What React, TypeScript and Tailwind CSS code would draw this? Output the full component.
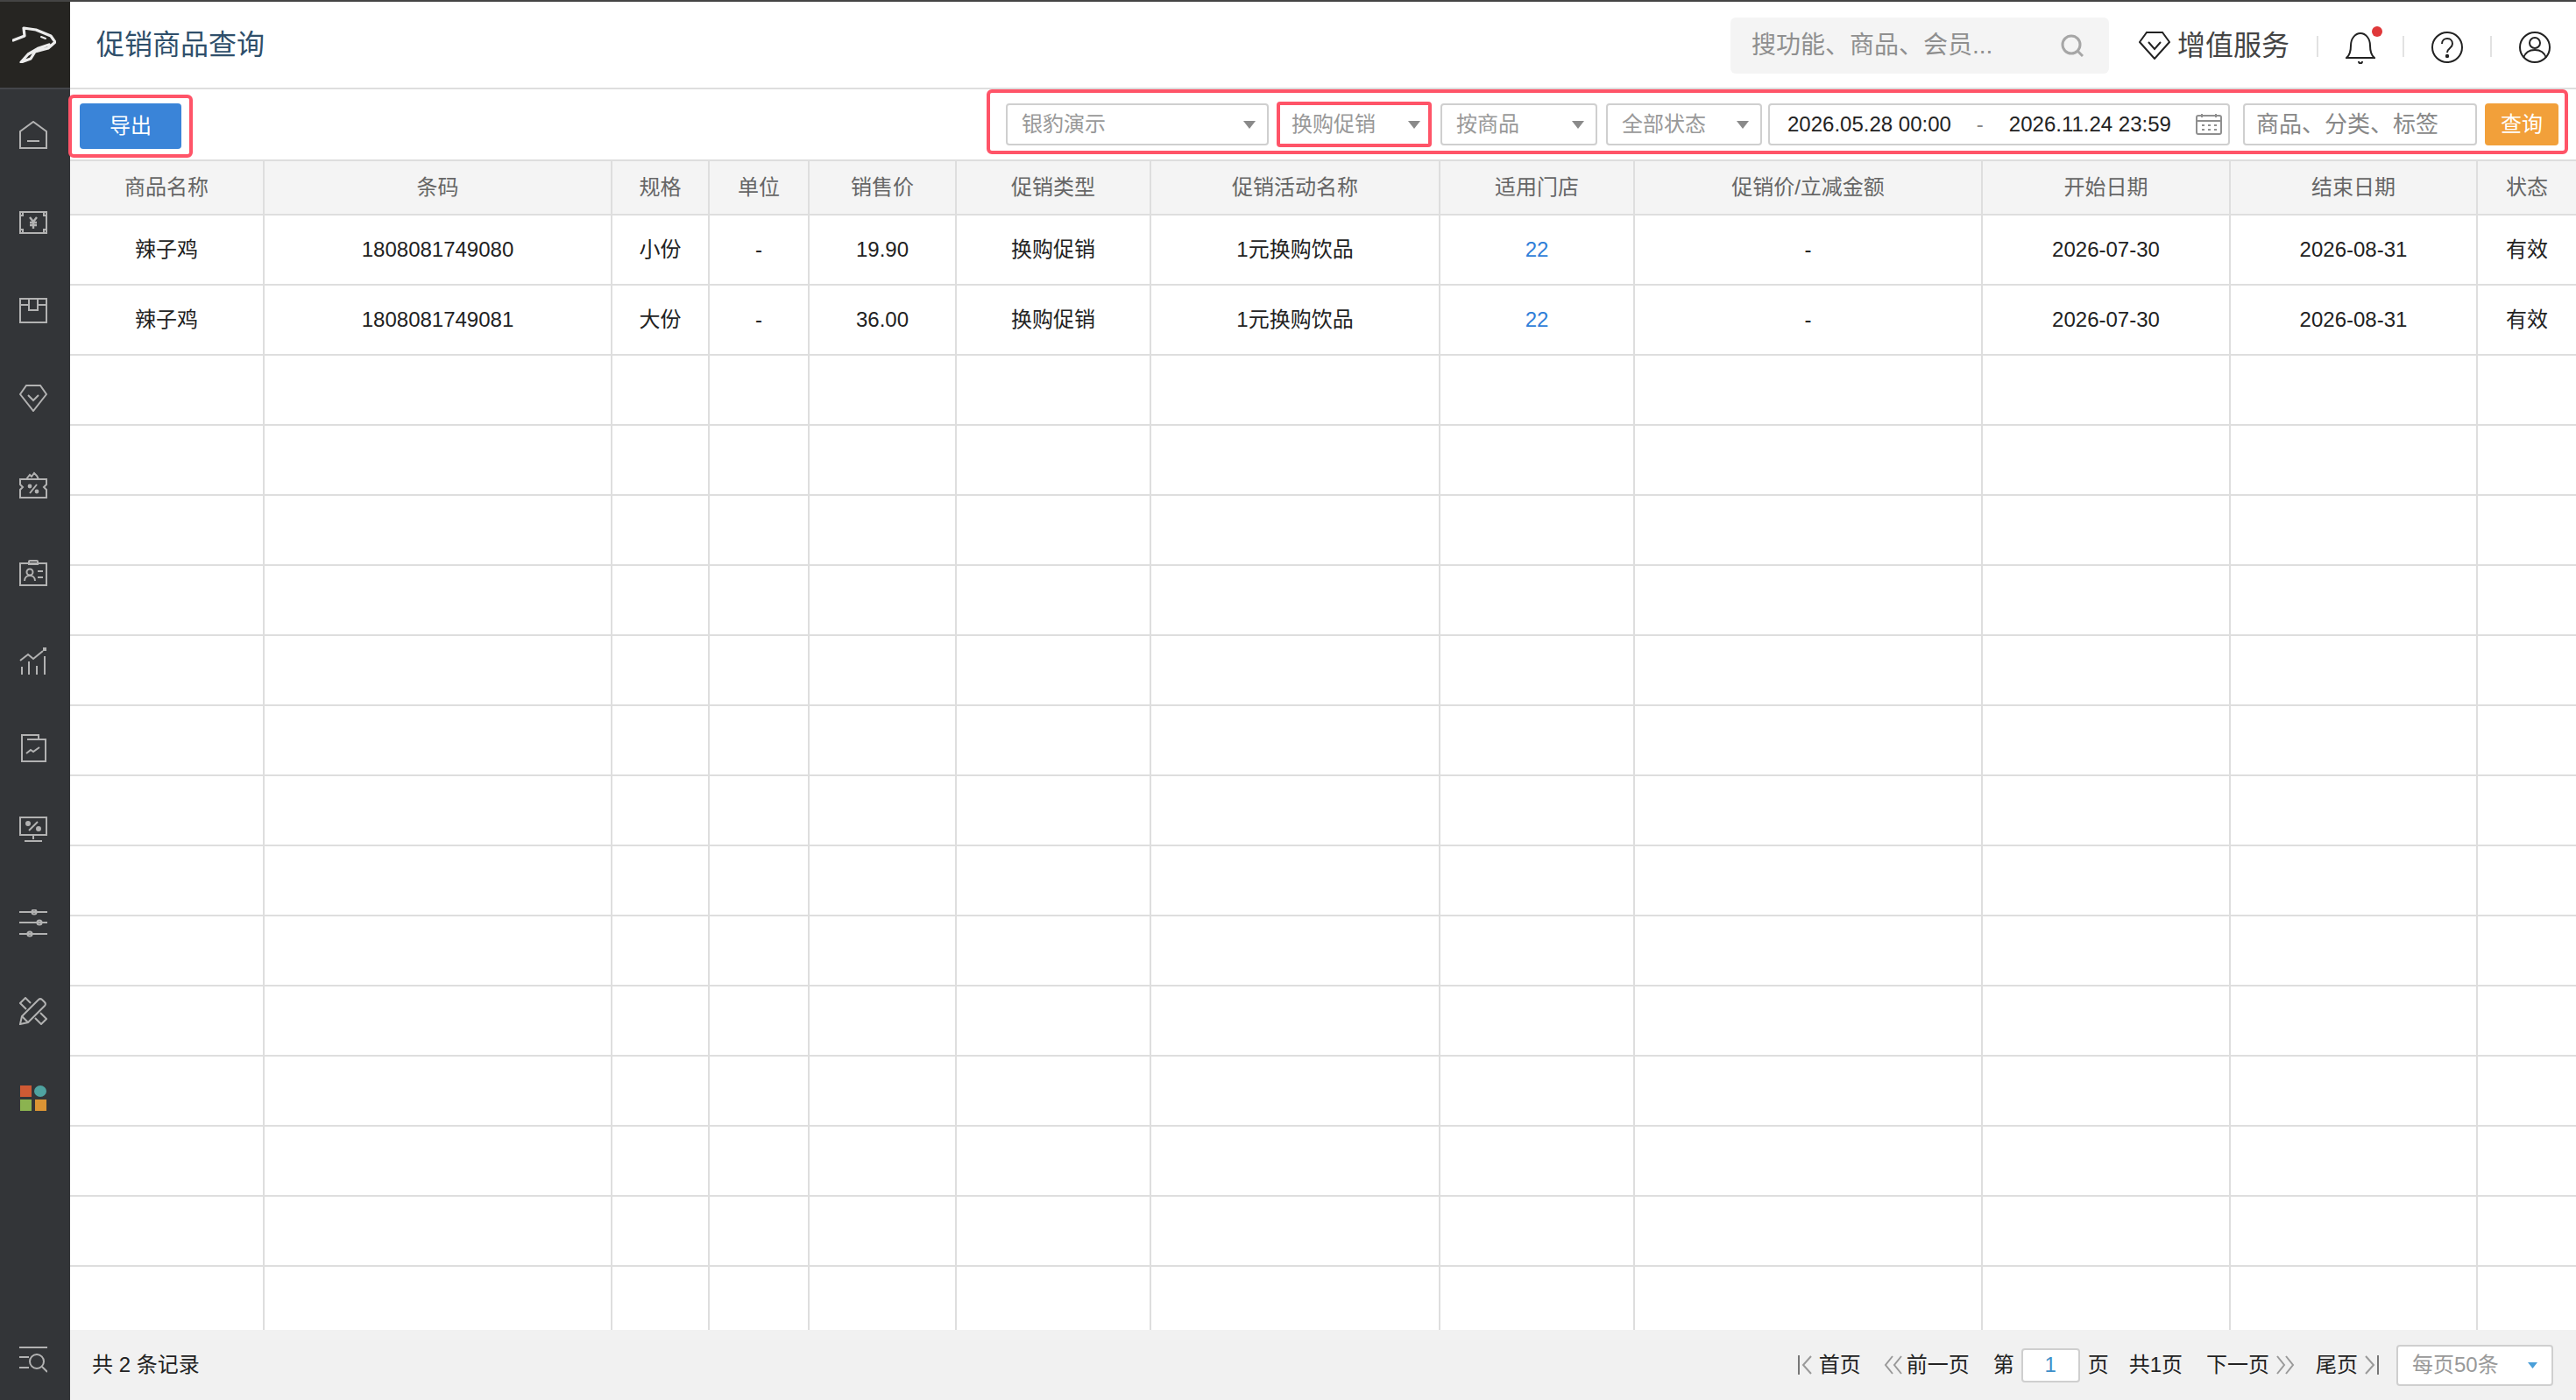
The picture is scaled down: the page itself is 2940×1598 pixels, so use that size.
import React from "react";

const columns = [
  { title: "商品名称", width: "w-[221px]" },
  { title: "条码", width: "w-[397px]" },
  { title: "规格", width: "w-[111px]" },
  { title: "单位", width: "w-[114px]" },
  { title: "销售价", width: "w-[168px]" },
  { title: "促销类型", width: "w-[222px]" },
  { title: "促销活动名称", width: "w-[330px]" },
  { title: "适用门店", width: "w-[222px]" },
  { title: "促销价/立减金额", width: "w-[397px]" },
  { title: "开始日期", width: "w-[283px]" },
  { title: "结束日期", width: "w-[282px]" },
  { title: "状态", width: "w-[113px]" },
];

const rows = [
  ["辣子鸡", "1808081749080", "小份", "-", "19.90", "换购促销", "1元换购饮品", "22", "-", "2026-07-30", "2026-08-31", "有效"],
  ["辣子鸡", "1808081749081", "大份", "-", "36.00", "换购促销", "1元换购饮品", "22", "-", "2026-07-30", "2026-08-31", "有效"],
];

const Icon = ({ children, w = 32, h = 32, className = "" }: { children: React.ReactNode; w?: number; h?: number; className?: string }) => (
  <svg width={w} height={h} viewBox={`0 0 ${w} ${h}`} fill="none" stroke="currentColor" strokeWidth="2" className={className}>
    {children}
  </svg>
);

const navIcons = [
  <Icon key="home">
    <path d="M1 31V12L16 1l15 11v19z" />
    <path d="M9 23h14" />
  </Icon>,
  <Icon key="money" h={26}>
    <path d="M1 1h30v24H1z" />
    <path d="M1 5h3V1M31 5h-3V1M1 21h3v4M31 21h-3v4" />
    <path d="M12 7l4 5 4-5M16 12v8M12 13h8M12 16h8" strokeWidth="2.4" />
  </Icon>,
  <Icon key="box" h={29}>
    <path d="M1 1h30v27H1z" />
    <path d="M1 8h10V1M31 8H21V1M11 8v6h10V8" />
  </Icon>,
  <Icon key="diamond" h={31}>
    <path d="M8 1h16l7 10-15 19L1 11z" />
    <path d="M10 12l6 6 6-6" />
  </Icon>,
  <Icon key="coupon">
    <path d="M1 9h30v6l-3 3 3 3v9H1v-9l3-3-3-3z" />
    <path d="M8 9l4-5 2 2 3-4 3 3 2 4" />
    <path d="M12 25l8-10" />
    <circle cx="12" cy="17" r="1.4" fill="currentColor" />
    <circle cx="20" cy="23" r="1.4" fill="currentColor" />
  </Icon>,
  <Icon key="card" h={30}>
    <path d="M1 4h30v25H1z" />
    <path d="M11 4V2a1 1 0 0 1 1-1h8a1 1 0 0 1 1 1v3h-10z" />
    <circle cx="12" cy="14" r="3.5" />
    <path d="M6 24c0-4 3-6 6-6s6 2 6 6M21 13h6M21 20h6" />
  </Icon>,
  <Icon key="chart">
    <path d="M1 16l9-7 6 5 11-9" />
    <path d="M3 32v-9M11 32V17M20 32v-10M29 32V11" />
    <path d="M27 1h4v4h-4z" fill="currentColor" stroke="none" />
  </Icon>,
  <Icon key="report">
    <path d="M3 31V1h19v5h8v25z" />
    <path d="M9 6h13" />
    <path d="M8 22l5-4 3 2 7-5" />
  </Icon>,
  <Icon key="screen" h={30} className="mb-[14px]">
    <path d="M1 1h30v20H1z" />
    <path d="M16 21v5M6 28h20" />
    <path d="M11 16l10-10" />
    <circle cx="10" cy="8" r="2" fill="currentColor" />
    <circle cx="22" cy="14" r="2" fill="currentColor" />
  </Icon>,
  <Icon key="sliders">
    <path d="M0 3h32M0 15h32M0 28h32" />
    <circle cx="17" cy="3" r="2.6" />
    <circle cx="23" cy="15" r="2.6" />
    <circle cx="12" cy="28" r="2.6" />
  </Icon>,
  <Icon key="tools">
    <path d="M1 31l2-9L22 3a3 3 0 0 1 4 0l3 3a3 3 0 0 1 0 4L10 29z" />
    <path d="M3 22l7 7" />
    <path d="M13 7L7 1 1 7l7 7M18 24l7 7 6-6-7-7" />
  </Icon>,
  <svg key="apps" width="32" height="30" viewBox="0 0 32 30">
    <rect x="1" y="0" width="13" height="13" fill="#cf5a34" />
    <ellipse cx="24" cy="6.500" rx="7" ry="6.500" fill="#4fa3a0" />
    <rect x="1" y="16" width="13" height="13" fill="#8bb350" />
    <rect x="18" y="16" width="13" height="13" fill="#db9434" />
  </svg>,
];

const Caret = ({ className = "" }: { className?: string }) => (
  <svg width="14" height="9" viewBox="0 0 14 9" className={className}>
    <path d="M0 0h14L7 9z" fill="currentColor" />
  </svg>
);

const Select = ({ label, className }: { label: string; className: string }) => (
  <div className={`flex h-[48px] items-center justify-between rounded-[4px] border-2 border-[#cfcfcf] bg-white pl-[16px] pr-[13px] text-[24px] text-[#999] ${className}`}>
    <span>{label}</span>
    <Caret className="text-[#8a8a8a]" />
  </div>
);

const Separator = () => <div className="mx-[31px] mt-[2px] h-[24px] w-[2px] bg-[#e2e2e2]" />;

const Sidebar = () => (
  <aside className="flex w-[80px] shrink-0 flex-col bg-[#333538] text-[#b2b2b2]">
    <div className="flex h-[100px] items-center justify-center border-b-2 border-[#44464a] bg-[#262522] pr-[2px]">
      <svg width="50" height="42" viewBox="0 0 50 42" fill="none" stroke="#ececec" strokeWidth="3.2" strokeLinejoin="round" strokeLinecap="round">
        <path d="M1 16L14 11 13 2l14 2 17 7 5 7-8 7-15 4-5 8-11 4 8-9 12-7 12-4" />
        <path d="M33 12l5 2" strokeWidth="2" />
      </svg>
    </div>
    <nav className="flex flex-1 flex-col pr-[4px]">
      {navIcons.map((icon, i) => (
        <div key={i} className="flex h-[100px] items-center justify-center pt-[4px]">
          {icon}
        </div>
      ))}
    </nav>
    <div className="flex h-[62px] justify-center pr-[4px]">
      <Icon>
        <path d="M0 2h32M0 13h11M0 25h11" />
        <circle cx="20" cy="18" r="8" />
        <path d="M26 24l6 6" />
      </Icon>
    </div>
  </aside>
);

const Header = () => (
  <header className="flex h-[100px] shrink-0 items-center justify-between border-b-2 border-[#dedede] pl-[30px] pr-[29px] pt-[2px]">
    <h1 className="mt-[-2px] text-[32px] font-normal text-[#2f4f6b]">促销商品查询</h1>
    <div className="flex items-center text-[#222]">
      <div className="mr-[34px] flex h-[64px] w-[432px] items-center justify-between rounded-[6px] bg-[#f4f4f4] pl-[24px] pr-[29px] text-[28px] text-[#8f8f8f]">
        <span>搜功能、商品、会员...</span>
        <svg width="26" height="26" viewBox="0 0 26 26" fill="none" stroke="#a6a6a6" strokeWidth="3">
          <circle cx="12" cy="12" r="10" />
          <path d="M19 19l6 6" />
        </svg>
      </div>
      <Icon w={36} h={32}>
        <path d="M9 1h18l8 11-17 19L1 12z" />
        <path d="M11 12l7 8 7-8" />
      </Icon>
      <span className="ml-[8px] text-[32px] text-[#444]">增值服务</span>
      <Separator />
      <div className="relative mt-[6px]">
        <svg width="34" height="36" viewBox="0 0 34 36" fill="none" stroke="currentColor" strokeWidth="2" className="block">
          <path d="M1 29c4-3 5-7 5-14 0-8 5-14 11-14s11 6 11 14c0 7 1 11 5 14z" />
          <path d="M15 33c0 3 4 3 4 0" />
        </svg>
        <span className="absolute right-[-8px] top-[-7px] h-[12px] w-[12px] rounded-full bg-[#e0383a]" />
      </div>
      <Separator />
      <svg width="36" height="36" viewBox="0 0 36 36" fill="none" stroke="currentColor" strokeWidth="2" className="mt-[3px]">
        <circle cx="18" cy="18" r="17" />
        <path d="M12 14c0-4 3-6 6-6s6 2 6 6c0 5-6 5-6 10" />
        <circle cx="18" cy="28" r="1.2" fill="currentColor" />
      </svg>
      <Separator />
      <svg width="36" height="36" viewBox="0 0 36 36" fill="none" stroke="currentColor" strokeWidth="2" className="mt-[3px]">
        <circle cx="18" cy="18" r="17" />
        <circle cx="18" cy="13" r="6" />
        <path d="M5 30c2-6 7-9 13-9s11 3 13 9" />
      </svg>
    </div>
  </header>
);

const Toolbar = () => (
  <div className="flex h-[82px] shrink-0 items-start justify-between border-b-2 border-[#dedede]">
    <div className="relative z-10 ml-[-2px] mt-[6px] flex h-[72px] w-[142px] items-center justify-center rounded-[6px] border-4 border-[#ff5468]">
      <button className="h-[52px] w-[116px] rounded-[4px] bg-[#3a84d8] text-[24px] text-white">导出</button>
    </div>
    <div className="mr-[9px] flex h-[74px] items-start rounded-[6px] border-4 border-[#ff5468] pl-[18px] pr-[7px] pt-[12px]">
      <Select label="银豹演示" className="w-[300px]" />
      <Select label="换购促销" className="ml-[9px] mt-[-2px] !h-[52px] w-[177px] !border-4 !border-[#ff5468] !pl-[13px] !pr-[9px]" />
      <Select label="按商品" className="ml-[10px] w-[179px]" />
      <Select label="全部状态" className="ml-[10px] w-[178px]" />
      <div className="ml-[7px] flex h-[48px] w-[527px] items-center rounded-[4px] border-2 border-[#cfcfcf] pl-[20px] text-[24px] text-[#222]">
        <span>2026.05.28 00:00</span>
        <span className="w-[66px] text-center text-[#888]">-</span>
        <span>2026.11.24 23:59</span>
        <svg width="30" height="24" viewBox="0 0 30 24" fill="none" stroke="#8f8f8f" strokeWidth="2" className="ml-[28px]">
          <rect x="1" y="2" width="28" height="21" rx="2" />
          <path d="M1 8h28M7 0v4M23 0v4" />
          <path d="M7 13h3M14 13h3M21 13h3M7 18h3M14 18h3M21 18h3" />
        </svg>
      </div>
      <div className="ml-[15px] flex h-[48px] w-[267px] items-center rounded-[4px] border-2 border-[#cfcfcf] pl-[13px] text-[26px] text-[#888]">
        商品、分类、标签
      </div>
      <button className="ml-[9px] h-[48px] w-[84px] rounded-[4px] bg-[#f2a03a] text-[24px] text-white">查询</button>
    </div>
  </div>
);

const ProductTable = () => (
  <div className="min-h-0 flex-1 overflow-hidden">
    <table className="w-[2860px] table-fixed border-collapse text-center text-[24px]">
      <colgroup>
        {columns.map((col) => (
          <col key={col.title} className={col.width} />
        ))}
      </colgroup>
      <thead>
        <tr className="h-[61px] bg-[#f4f4f4]">
          {columns.map((col, i) => (
            <th key={col.title} className={`border-b-2 border-[#dedede] font-normal text-[#666] ${i < columns.length - 1 ? "border-r-2" : ""}`}>
              {col.title}
            </th>
          ))}
        </tr>
      </thead>
      <tbody>
        {Array.from({ length: 16 }).map((_, r) => (
          <tr key={r} className="h-[80px]">
            {columns.map((col, c) => (
              <td
                key={col.title}
                className={`border-b-2 border-[#dedede] ${c < columns.length - 1 ? "border-r-2" : ""} ${c === 7 ? "text-[#2f7ed8]" : "text-[#222]"}`}
              >
                {rows[r]?.[c]}
              </td>
            ))}
          </tr>
        ))}
      </tbody>
    </table>
  </div>
);

const DoubleChevron = ({ flip = false }: { flip?: boolean }) => (
  <svg width="22" height="22" viewBox="0 0 22 22" fill="none" stroke="#999" strokeWidth="2" className={flip ? "rotate-180" : ""}>
    <path d="M10 1L2 11l8 10M20 1l-8 10 8 10" />
  </svg>
);

const EdgeChevron = ({ flip = false }: { flip?: boolean }) => (
  <svg width="16" height="22" viewBox="0 0 16 22" fill="none" stroke="#777" strokeWidth="2" className={flip ? "rotate-180" : ""}>
    <path d="M1 0v22" />
    <path d="M15 1L6 11l9 10" stroke="#999" />
  </svg>
);

const Footer = () => (
  <footer className="flex h-[80px] shrink-0 items-center justify-between bg-[#f1f1f1] pl-[25px] pr-[26px] text-[24px] text-[#222]">
    <span>共 2 条记录</span>
    <div className="flex items-center">
      <EdgeChevron />
      <span className="ml-[8px]">首页</span>
      <span className="ml-[26px]"><DoubleChevron /></span>
      <span className="ml-[4px]">前一页</span>
      <span className="ml-[27px]">第</span>
      <div className="ml-[8px] flex h-[39px] w-[67px] items-center justify-center rounded-[4px] border-2 border-[#cfcfcf] bg-white text-[#3d8fc9]">1</div>
      <span className="ml-[9px]">页</span>
      <span className="ml-[23px]">共1页</span>
      <span className="ml-[27px]">下一页</span>
      <span className="ml-[7px]"><DoubleChevron flip /></span>
      <span className="ml-[24px]">尾页</span>
      <span className="ml-[8px]"><EdgeChevron flip /></span>
      <div className="ml-[20px] flex h-[47px] w-[179px] items-center justify-between rounded-[4px] border-2 border-[#cfcfcf] bg-white pl-[16px] pr-[16px] text-[#999]">
        <span>每页50条</span>
        <svg width="11" height="7" viewBox="0 0 11 7">
          <path d="M0 0h11L5.500 7z" fill="#4a9fd8" />
        </svg>
      </div>
    </div>
  </footer>
);

export default function App() {
  return (
    <div className="flex h-[1598px] w-[2940px] flex-col overflow-hidden bg-white [font-family:'Liberation_Sans','Noto_Sans_CJK_SC',sans-serif]">
      <div className="h-[2px] shrink-0 bg-[#444]" />
      <div className="flex min-h-0 flex-1">
        <Sidebar />
        <main className="flex min-w-0 flex-1 flex-col">
          <Header />
          <Toolbar />
          <ProductTable />
          <Footer />
        </main>
      </div>
    </div>
  );
}
